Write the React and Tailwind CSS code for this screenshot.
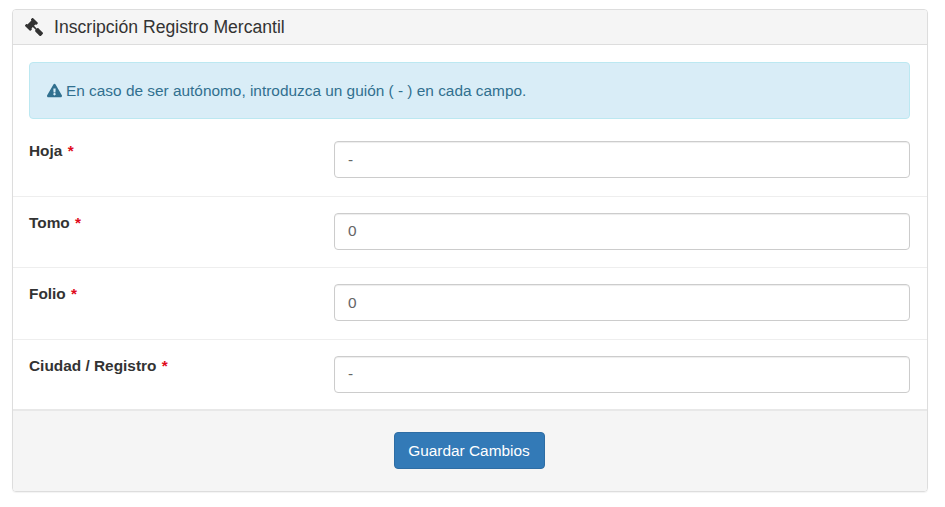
import React from "react";
import { FaGavel, FaExclamationTriangle } from "react-icons/fa";

function Row({ label, value, last }) {
  return (
    <div className={`flex h-[71.5px] pl-4 pr-[17px] pt-4 ${last ? "border-b-2 border-[#e8e8e8]" : "border-b border-[#eeeeee]"}`}>
      <label className="w-[305px] shrink-0 text-[15.4px] leading-5 font-bold text-[#333333]">
        {label} <span className="ml-[1px] text-[#e00b1c]">*</span>
      </label>
      <div className="flex h-[37px] flex-1 items-center rounded border border-[#cccccc] bg-white px-[13px] text-[15.4px] text-[#666666] shadow-[inset_0_1px_1px_rgba(0,0,0,0.075)]">
        {value}
      </div>
    </div>
  );
}

export default function App() {
  return (
    <div className="h-[507px] w-[945px] bg-white pt-[9px] pl-3 font-['Liberation_Sans',Arial,sans-serif]">
      <div className="w-[916px] overflow-hidden rounded border border-[#dddddd] shadow-[0_1px_1px_rgba(0,0,0,0.05)]">
        <div className="flex h-[35px] items-center border-b border-[#dddddd] bg-[#f5f5f5] pl-3 text-[#333333]">
          <FaGavel className="h-[18px] w-[18px] -scale-x-100 text-[#333333]" />
          <span className="ml-[11px] text-[17.6px]">Inscripción Registro Mercantil</span>
        </div>
        <div className="pl-4 pr-[17px] pt-[17px]">
          <div className="flex h-[57px] items-center rounded border border-[#bce8f1] bg-[#d9edf7] pl-[17px] text-[15.4px] text-[#31708f]">
            <FaExclamationTriangle className="mr-1 h-[15px] w-[15px]" />
            <span>En caso de ser autónomo, introduzca un guión ( - ) en cada campo.</span>
          </div>
        </div>
        <div className="mt-[6px]">
          <Row label="Hoja" value="-" />
          <Row label="Tomo" value="0" />
          <Row label="Folio" value="0" />
          <Row label="Ciudad / Registro" value="-" last />
        </div>
        <div className="flex h-[80px] items-center justify-center bg-[#f5f5f5] pb-[1px] pr-[2px]">
          <button className="h-[37px] w-[151px] rounded border border-[#2e6da4] bg-[#337ab7] text-[15.4px] text-white">
            Guardar Cambios
          </button>
        </div>
      </div>
    </div>
  );
}
